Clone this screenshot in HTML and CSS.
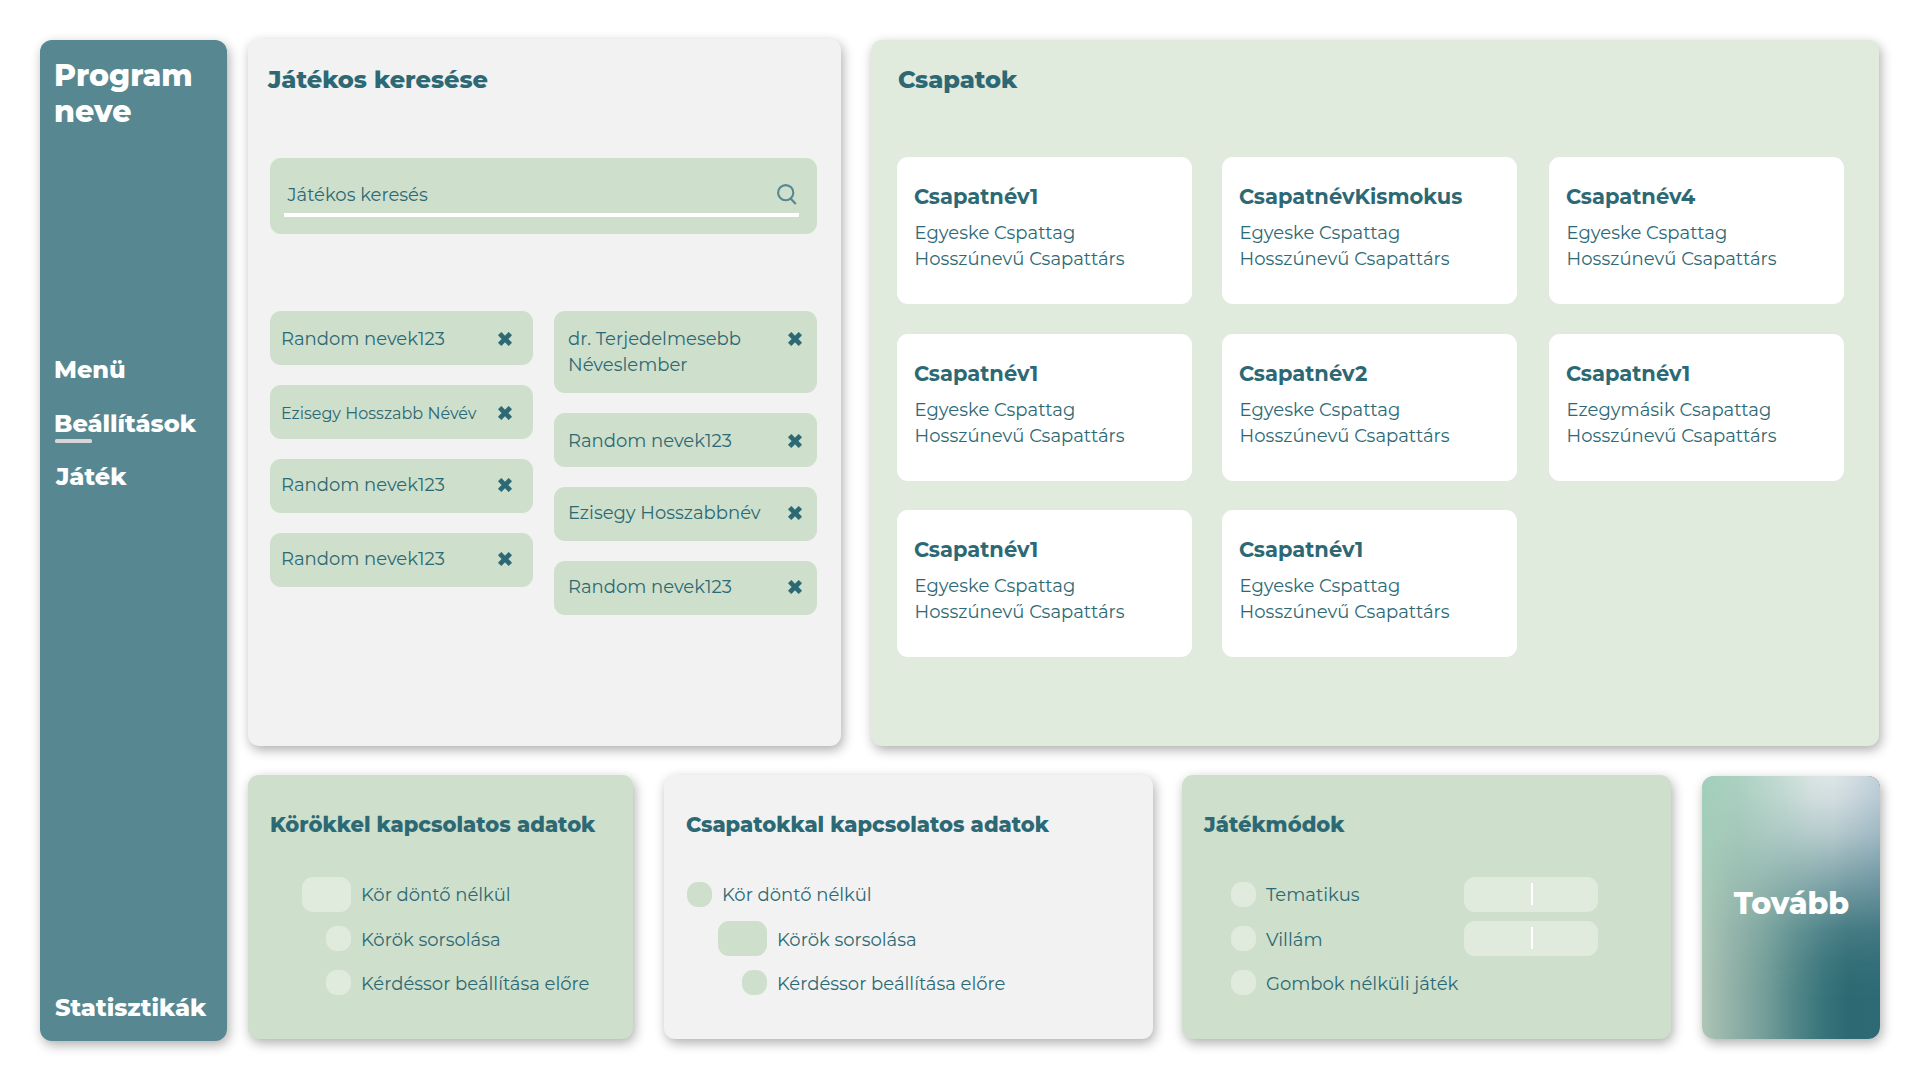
FILE: index.html
```html
<!DOCTYPE html>
<html lang="hu">
<head>
<meta charset="utf-8">
<title>Beállítások</title>
<link rel="stylesheet" href="styles.css">
</head>
<body>
<svg class="defs" width="0" height="0" aria-hidden="true">
  <symbol id="x" viewBox="0 0 13 13"><path d="M3.1 0.2 6.5 3.6 9.9 0.2 12.8 3.1 9.4 6.5 12.8 9.9 9.9 12.8 6.5 9.4 3.1 12.8 0.2 9.9 3.6 6.5 0.2 3.1Z"/></symbol>
</svg>
<div class="app">
  <aside class="sidebar">
    <h1 class="brand">Program neve</h1>
    <nav class="nav">
      <a class="nav-item">Menü</a>
      <a class="nav-item active">Beállítások</a>
      <a class="nav-item indent">Játék</a>
    </nav>
    <a class="nav-item stats">Statisztikák</a>
  </aside>

  <main class="main">
    <div class="row top">
      <section class="panel gray players">
        <h2 class="title">Játékos keresése</h2>
        <div class="search">
          <div class="search-field">
            <span>Játékos keresés</span>
            <svg class="search-icon" viewBox="0 0 20 21"><circle cx="8.7" cy="8.7" r="7.6"/><path d="M13.4 14.2 18.8 20"/></svg>
          </div>
        </div>
        <div class="chips">
          <div class="chip-col">
            <div class="chip"><span>Random nevek123</span><svg class="x"><use href="#x"/></svg></div>
            <div class="chip"><span class="small">Ezisegy Hosszabb Névév</span><svg class="x"><use href="#x"/></svg></div>
            <div class="chip raised"><span>Random nevek123</span><svg class="x"><use href="#x"/></svg></div>
            <div class="chip raised"><span>Random nevek123</span><svg class="x"><use href="#x"/></svg></div>
          </div>
          <div class="chip-col right">
            <div class="chip tall"><span>dr. Terjedelmesebb Néveslember</span><svg class="x"><use href="#x"/></svg></div>
            <div class="chip"><span>Random nevek123</span><svg class="x"><use href="#x"/></svg></div>
            <div class="chip raised"><span>Ezisegy Hosszabbnév</span><svg class="x"><use href="#x"/></svg></div>
            <div class="chip raised"><span>Random nevek123</span><svg class="x"><use href="#x"/></svg></div>
          </div>
        </div>
      </section>

      <section class="panel pale teams">
        <h2 class="title">Csapatok</h2>
        <div class="team-grid">
          <article class="team"><h3>Csapatnév1</h3><p>Egyeske Cspattag</p><p>Hosszúnevű Csapattárs</p></article>
          <article class="team"><h3>CsapatnévKismokus</h3><p>Egyeske Cspattag</p><p>Hosszúnevű Csapattárs</p></article>
          <article class="team"><h3>Csapatnév4</h3><p>Egyeske Cspattag</p><p>Hosszúnevű Csapattárs</p></article>
          <article class="team"><h3>Csapatnév1</h3><p>Egyeske Cspattag</p><p>Hosszúnevű Csapattárs</p></article>
          <article class="team"><h3>Csapatnév2</h3><p>Egyeske Cspattag</p><p>Hosszúnevű Csapattárs</p></article>
          <article class="team"><h3>Csapatnév1</h3><p>Ezegymásik Csapattag</p><p>Hosszúnevű Csapattárs</p></article>
          <article class="team"><h3>Csapatnév1</h3><p>Egyeske Cspattag</p><p>Hosszúnevű Csapattárs</p></article>
          <article class="team"><h3>Csapatnév1</h3><p>Egyeske Cspattag</p><p>Hosszúnevű Csapattárs</p></article>
        </div>
      </section>
    </div>

    <div class="row bottom">
      <section class="panel green rounds">
        <h2 class="subtitle">Körökkel kapcsolatos adatok</h2>
        <div class="option"><i class="box"></i><span>Kör döntő nélkül</span></div>
        <div class="option"><i class="dot"></i><span>Körök sorsolása</span></div>
        <div class="option"><i class="dot"></i><span>Kérdéssor beállítása előre</span></div>
      </section>
      <section class="panel gray team-data">
        <h2 class="subtitle">Csapatokkal kapcsolatos adatok</h2>
        <div class="option outdent"><i class="dot"></i><span>Kör döntő nélkül</span></div>
        <div class="option"><i class="box"></i><span>Körök sorsolása</span></div>
        <div class="option"><i class="dot"></i><span>Kérdéssor beállítása előre</span></div>
      </section>
      <section class="panel green modes">
        <h2 class="subtitle">Játékmódok</h2>
        <div class="option"><i class="dot"></i><span>Tematikus</span><div class="input"><i class="caret"></i></div></div>
        <div class="option"><i class="dot"></i><span>Villám</span><div class="input"><i class="caret"></i></div></div>
        <div class="option"><i class="dot"></i><span>Gombok nélküli játék</span></div>
      </section>
      <button class="next"><span>Tovább</span></button>
    </div>
  </main>
</div>
</body>
</html>
```
FILE: styles.css
```css
:root {
  --ink: #2d6974;
  --teal: #578791;
  --green: #cedfcc;
  --pale: #e0ebde;
  --gray: #f2f2f2;
  --shadow: 2px 4px 12px rgba(0, 0, 0, 0.32);
}

* { box-sizing: border-box; }

body {
  margin: 0;
  background: #fff;
  color: var(--ink);
  font: 400 18px/26px "Montserrat", "Inter", sans-serif;
}

h1, h2, h3, p { margin: 0; }
.defs { display: block; }

.app {
  display: flex;
  gap: 21px;
  width: 1920px;
  height: 1080px;
  padding: 39px 40px 39px;
}

/* Sidebar */
.sidebar {
  display: flex;
  flex-direction: column;
  width: 187px;
  margin-top: 1px;
  padding: 18px 14px 18px;
  border-radius: 12px;
  background: var(--teal);
  box-shadow: var(--shadow);
  color: #fff;
}
.brand { width: 150px; font-size: 30px; line-height: 36px; font-weight: 800; }
.nav { display: flex; flex-direction: column; gap: 24px; margin-top: 225px; }
.nav-item { display: block; font-size: 24px; line-height: 30px; font-weight: 800; }
.nav-item.indent { margin-top: -1px; padding-left: 2px; }
.active { position: relative; }
.active::after {
  content: "";
  position: absolute;
  left: 1px;
  bottom: -4px;
  width: 37px;
  height: 4px;
  border-radius: 1.5px;
  background: #d8d4d8;
}
.stats { margin-top: auto; padding-left: 1px; }

/* Main area */
.main { display: flex; flex-direction: column; gap: 28px; width: 1632px; }
.row { display: flex; }
.panel { border-radius: 11px; box-shadow: var(--shadow); }
.gray { background: var(--gray); }
.pale { background: var(--pale); }
.green { background: var(--green); }
.title { font-size: 24px; line-height: 30px; font-weight: 800; }

.top { gap: 30px; height: 707px; }

/* Player search */
.players { width: 593px; padding: 26px 24px 0 22px; }
.players .title { margin-left: -2px; }
.search { height: 76px; margin-top: 63px; padding: 24px 18px 0 14px; border-radius: 11px; background: var(--green); }
.search-field {
  display: flex;
  justify-content: space-between;
  height: 35px;
  padding: 0 2px 0 3.5px;
  border-bottom: 4px solid #fff;
  border-radius: 1px;
}
.search-icon { width: 20px; height: 21px; margin-top: 2px; fill: none; stroke: var(--teal); stroke-width: 2.1; }
.chips { display: flex; gap: 21px; margin-top: 77px; }
.chip-col { display: flex; flex-direction: column; gap: 20px; width: 263px; }
.chip {
  display: flex;
  justify-content: space-between;
  align-items: flex-start;
  height: 54px;
  padding: 15px 21px 0 11px;
  border-radius: 11px;
  background: var(--green);
}
.right .chip { padding-left: 14px; padding-right: 15px; }
.chip.raised { padding-top: 13px; }
.chip.tall { height: 82px; }
.tall span { width: 190px; }
.small { padding-top: 1px; font-size: 16px; }
.x { width: 14px; height: 14px; margin-top: 6px; fill: var(--ink); stroke: var(--ink); stroke-width: 0.5; stroke-linejoin: round; }

/* Teams */
.teams { width: 1008px; margin-top: 1px; padding: 25px 0 0 26px; }
.teams .title { padding-left: 1px; }
.team-grid {
  display: grid;
  grid-template-columns: 325px 327px 295px;
  grid-auto-rows: 147px;
  row-gap: 29.5px;
  margin-top: 62px;
}
.team { width: 295px; padding: 27px 16px 0 17px; border-radius: 11px; background: #fff; }
.team h3 { margin-bottom: 10px; font-size: 21px; line-height: 26px; font-weight: 700; }
.team p { padding-left: 0.6px; letter-spacing: 0.03px; }

/* Bottom row */
.bottom { height: 265px; }
.subtitle { margin-bottom: 33px; font-size: 21px; line-height: 28px; font-weight: 800; }
.rounds { width: 385px; margin: 1px 31px 0 0; padding: 36px 0 0 22px; }
.team-data { width: 489px; margin: 1px 29px 0 0; padding: 36px 0 0 22px; }
.modes { width: 489px; margin: 1px 31px 0 0; padding: 36px 0 0 22px; }
.option { display: flex; align-items: center; height: 44px; padding-left: 56px; }
.option span { margin: 2px 0 0 10px; }
.option + .option span { margin-top: 3px; }
.dot { width: 25px; height: 25px; border-radius: 11px; background: var(--pale); }
.box { width: 49px; height: 35px; margin-left: -24px; border-radius: 11px; background: var(--pale); }
.gray .dot, .gray .box { background: var(--green); }
.team-data .outdent { padding-left: 1px; }
.modes .option { padding-left: 27px; }
.modes span { width: 198px; }
.input {
  display: flex;
  align-items: center;
  justify-content: center;
  width: 134px;
  height: 35px;
  padding-left: 1px;
  border-radius: 11px;
  background: var(--pale);
}
.caret { width: 2px; height: 22px; background: #fff; }

/* Next button */
.next {
  position: relative;
  overflow: hidden;
  width: 178px;
  height: 263px;
  margin-top: 2px;
  padding: 0 0 8px 1px;
  border: 0;
  border-radius: 12px;
  background: linear-gradient(90deg, #adc6b6 0%, #95b3a9 15%, #749e99 35%, #528788 52%, #38747b 68%, #2c6972 82%, #2d6a74 100%);
  box-shadow: var(--shadow);
  color: #fff;
  font: 800 30px/38px "Montserrat", "Inter", sans-serif;
}
.next::before {
  content: "";
  position: absolute;
  inset: 0;
  background: linear-gradient(90deg, #a1cfbb 0%, #abd0c1 20%, #c5dbd4 45%, #d9e4e2 62%, #dde5e7 74%, #d2dce2 86%, #c0d0da 100%);
  mask-image: linear-gradient(180deg, #000 0%, rgba(0, 0, 0, 0.94) 8%, rgba(0, 0, 0, 0.77) 22%, rgba(0, 0, 0, 0.54) 35%, rgba(0, 0, 0, 0.34) 47%, rgba(0, 0, 0, 0.15) 59%, rgba(0, 0, 0, 0.05) 71%, transparent 85%);
}
.next span { position: relative; }
```
